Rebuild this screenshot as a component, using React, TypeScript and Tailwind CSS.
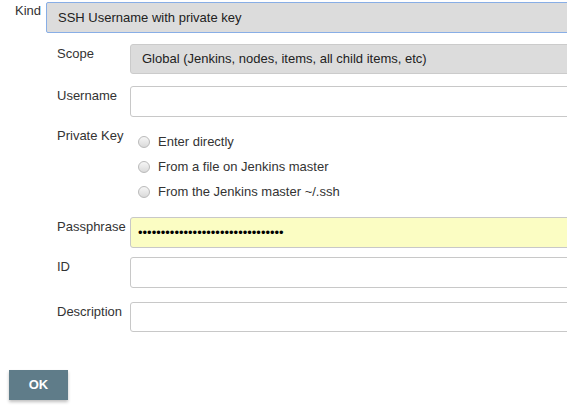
const font = { fontFamily: '"Liberation Sans", Arial, sans-serif' };

function Field({ label, top, children }: { label: string; top: string; children: React.ReactNode }) {
  return (
    <div className={`flex ${top}`}>
      <div className="w-[73px] shrink-0 pt-[2px] text-[13px] leading-[16px] text-[#333]">{label}</div>
      {children}
    </div>
  );
}

function TextBox({ className = '', children }: { className?: string; children?: React.ReactNode }) {
  return (
    <div
      className={`h-[31px] w-[600px] shrink-0 rounded-[3px] border border-[#c8c8c8] bg-white ${className}`}
    >
      {children}
    </div>
  );
}

function Radio({ label }: { label: string }) {
  return (
    <div className="flex h-[25px] items-center">
      <span className="ml-[8px] h-[12px] w-[12px] rounded-full border border-[#bababa] bg-gradient-to-b from-[#f6f6f6] to-[#dadada]" />
      <span className="ml-[8px] text-[13px] leading-[16px] text-[#333]">{label}</span>
    </div>
  );
}

export default function App() {
  return (
    <div className="h-[416px] w-[567px] overflow-hidden bg-white" style={font}>
      <div className="flex pl-[15px] pt-[2px]">
        <div className="w-[31px] shrink-0 pt-[1px] text-[13px] leading-[16px] text-[#333]">Kind</div>
        <div className="flex h-[31px] w-[600px] shrink-0 items-center rounded-[2px] border border-[#88aee6] bg-[#dcdcdc] pl-[11px] text-[13px] text-[#222]">
          SSH Username with private key
        </div>
      </div>

      <div className="pl-[57px]">
        <Field label="Scope" top="mt-[11px]">
          <div className="flex h-[30px] w-[600px] shrink-0 items-center rounded-[3px] border border-[#cbcbcb] bg-[#dcdcdc] pl-[11px] text-[13px] text-[#222]">
            Global (Jenkins, nodes, items, all child items, etc)
          </div>
        </Field>

        <Field label="Username" top="mt-[12px]">
          <TextBox />
        </Field>

        <Field label="Private Key" top="mt-[9px]">
          <div className="flex flex-col pt-[3px]">
            <Radio label="Enter directly" />
            <Radio label="From a file on Jenkins master" />
            <Radio label="From the Jenkins master ~/.ssh" />
          </div>
        </Field>

        <Field label="Passphrase" top="mt-[13px]">
          <TextBox className="flex items-center !bg-[#fbfdc3] pl-[7px]">
            <span className="text-[13px] leading-[16px] text-black">{'•'.repeat(32)}</span>
          </TextBox>
        </Field>

        <Field label="ID" top="mt-[9px]">
          <TextBox />
        </Field>

        <Field label="Description" top="mt-[14px]">
          <TextBox className="!h-[30px]" />
        </Field>
      </div>

      <button className="ml-[9px] mt-[38px] flex h-[30px] w-[59px] items-center justify-center bg-[#5f7c89] text-[13px] font-bold text-white shadow-[0_2px_3px_rgba(0,0,0,0.25)]">
        OK
      </button>
    </div>
  );
}
